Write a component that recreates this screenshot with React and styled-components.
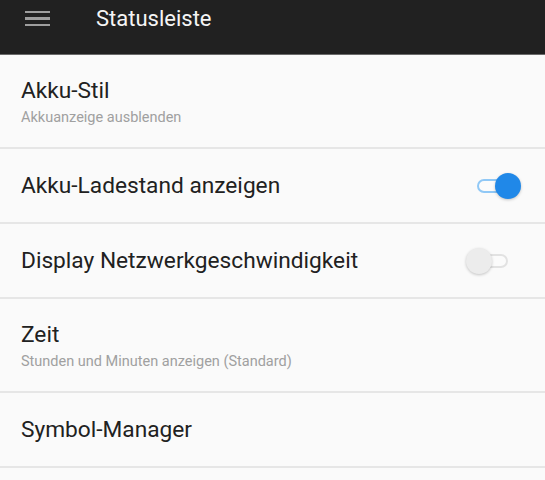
import React from "react";
import styled, { createGlobalStyle } from "styled-components";

const Global = createGlobalStyle`
  html, body { margin: 0; padding: 0; background: #fafafa; }
  body { font-family: Roboto, "Noto Sans", sans-serif; }
`;

const Page = styled.div`
  width: 545px;
  height: 480px;
  overflow: hidden;
  background: #fafafa;
`;

const Toolbar = styled.header`
  background: #212121;
  border-bottom: 1px solid #6a6a6a;
  display: flex;
  align-items: center;
  padding-left: 25px;
  padding-bottom: 17px;
  height: 37px;
`;

const MenuIcon = styled.div`
  width: 25px;
  display: flex;
  flex-direction: column;
  gap: 4px;
  margin-right: 46px;
  span {
    display: block;
    height: 2.5px;
    background: #9e9e9e;
  }
`;

const Title = styled.h1`
  margin: 0;
  font-size: 22px;
  font-weight: 400;
  color: #f5f5f5;
`;

const List = styled.div`
  display: flex;
  flex-direction: column;
`;

const Row = styled.div`
  display: flex;
  align-items: center;
  justify-content: space-between;
  min-height: ${(p) => (p.$tall ? "92px" : "73px")};
  border-bottom: 2px solid #e6e6e6;
  padding: 0 37px 0 21px;
`;

const Texts = styled.div`
  display: flex;
  flex-direction: column;
  gap: 5px;
  padding-top: ${(p) => (p.$tall ? "2px" : "0")};
`;

const ItemTitle = styled.div`
  font-size: 22.7px;
  color: #212121;
  line-height: 26px;
`;

const ItemSub = styled.div`
  font-size: 14.5px;
  color: #a0a0a0;
  line-height: 17px;
`;

const Track = styled.div`
  position: relative;
  width: 31px;
  height: 14px;
  box-sizing: border-box;
  border: 2px solid ${(p) => (p.$on ? "#90c8f6" : "#e2e2e2")};
  border-radius: 8px;
  background: #fbfbfb;
`;

const Thumb = styled.div`
  position: absolute;
  top: 50%;
  width: 26px;
  height: 26px;
  border-radius: 50%;
  transform: translateY(-50%);
  left: ${(p) => (p.$on ? "16px" : "-13px")};
  background: ${(p) => (p.$on ? "#2088e8" : "#ececec")};
  box-shadow: 0 1px 3px rgba(0, 0, 0, 0.22);
`;

function Switch({ on }) {
  return (
    <Track $on={on}>
      <Thumb $on={on} />
    </Track>
  );
}

const items = [
  { title: "Akku-Stil", sub: "Akkuanzeige ausblenden" },
  { title: "Akku-Ladestand anzeigen", toggle: true, on: true },
  { title: "Display Netzwerkgeschwindigkeit", toggle: true, on: false },
  { title: "Zeit", sub: "Stunden und Minuten anzeigen (Standard)" },
  { title: "Symbol-Manager" },
];

export default function App() {
  return (
    <Page>
      <Global />
      <Toolbar>
        <MenuIcon>
          <span />
          <span />
          <span />
        </MenuIcon>
        <Title>Statusleiste</Title>
      </Toolbar>
      <List>
        {items.map((it) => (
          <Row key={it.title} $tall={!!it.sub}>
            <Texts $tall={!!it.sub}>
              <ItemTitle>{it.title}</ItemTitle>
              {it.sub && <ItemSub>{it.sub}</ItemSub>}
            </Texts>
            {it.toggle && <Switch on={it.on} />}
          </Row>
        ))}
      </List>
    </Page>
  );
}
